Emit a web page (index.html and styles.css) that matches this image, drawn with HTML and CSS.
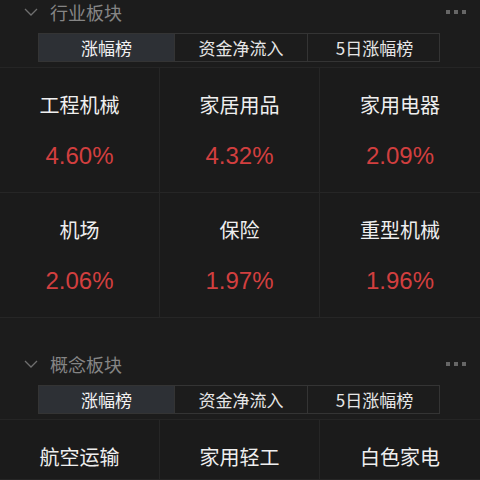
FILE: index.html
```html
<!DOCTYPE html>
<html lang="zh">
<head>
<meta charset="utf-8">
<link rel="stylesheet" href="styles.css">
</head>
<body>
<div class="page">
  <section class="block">
    <div class="block-head">
      <svg class="chev" width="14" height="8" viewBox="0 0 14 8"><polyline points="1,1 7,7 13,1" fill="none" stroke="#6f6f6f" stroke-width="1.3"/></svg>
      <span class="title">行业板块</span>
      <span class="dots"><i></i><i></i><i></i></span>
    </div>
    <div class="tabs">
      <div class="tab active">涨幅榜</div>
      <div class="tab">资金净流入</div>
      <div class="tab">5日涨幅榜</div>
    </div>
    <div class="grid">
      <div class="cell"><div class="name">工程机械</div><div class="pct">4.60%</div></div>
      <div class="cell"><div class="name">家居用品</div><div class="pct">4.32%</div></div>
      <div class="cell"><div class="name">家用电器</div><div class="pct">2.09%</div></div>
      <div class="cell"><div class="name">机场</div><div class="pct">2.06%</div></div>
      <div class="cell"><div class="name">保险</div><div class="pct">1.97%</div></div>
      <div class="cell"><div class="name">重型机械</div><div class="pct">1.96%</div></div>
    </div>
  </section>
  <section class="block second">
    <div class="block-head">
      <svg class="chev" width="14" height="8" viewBox="0 0 14 8"><polyline points="1,1 7,7 13,1" fill="none" stroke="#6f6f6f" stroke-width="1.3"/></svg>
      <span class="title">概念板块</span>
      <span class="dots"><i></i><i></i><i></i></span>
    </div>
    <div class="tabs">
      <div class="tab active">涨幅榜</div>
      <div class="tab">资金净流入</div>
      <div class="tab">5日涨幅榜</div>
    </div>
    <div class="grid short">
      <div class="cell"><div class="name">航空运输</div></div>
      <div class="cell"><div class="name">家用轻工</div></div>
      <div class="cell"><div class="name">白色家电</div></div>
    </div>
  </section>
</div>
</body>
</html>
```
FILE: styles.css
```css
html, body {
  margin: 0;
  padding: 0;
  background: #1c1c1c;
}
body {
  width: 480px;
  height: 480px;
  overflow: hidden;
  font-family: "Noto Sans CJK SC", "Liberation Sans", sans-serif;
  color: #ececec;
}
.page {
  display: flex;
  flex-direction: column;
}
.block-head {
  height: 24px;
  display: flex;
  align-items: center;
  padding-left: 24px;
  padding-right: 14px;
}
.chev {
  display: block;
  margin-right: 12px;
}
.title {
  font-size: 18px;
  color: #858585;
  line-height: 24px;
}
.dots {
  margin-left: auto;
  display: flex;
  gap: 4px;
}
.dots i {
  display: block;
  width: 4px;
  height: 4px;
  background: #666666;
}
.tabs {
  margin: 9px 0 0 38px;
  width: 402px;
  height: 29px;
  display: grid;
  grid-template-columns: 135px 133px 134px;
  box-sizing: border-box;
  border: 1px solid #343434;
}
.tab {
  display: flex;
  align-items: center;
  justify-content: center;
  font-size: 17px;
  color: #e6e6e6;
  border-left: 1px solid #343434;
}
.tab:first-child {
  border-left: none;
}
.tab.active {
  background: #2d3035;
  color: #f2f2f2;
}
.grid {
  margin-top: 5px;
  border-top: 1px solid #252525;
  display: grid;
  grid-template-columns: 160px 160px 160px;
  grid-auto-rows: 125px;
}
.grid.short {
  grid-auto-rows: 60px;
}
.cell {
  display: flex;
  flex-direction: column;
  align-items: center;
  border-right: 1px solid #262626;
  border-bottom: 1px solid #262626;
  background: #1b1b1b;
}
.cell:nth-child(3n) {
  border-right: none;
}
.name {
  margin-top: 23px;
  font-size: 20px;
  line-height: 28px;
  color: #efefef;
}
.pct {
  margin-top: 23px;
  font-family: "Liberation Sans", Arial, sans-serif;
  font-size: 24px;
  line-height: 28px;
  color: #d23f3f;
}
.second {
  margin-top: 34px;
}
```
